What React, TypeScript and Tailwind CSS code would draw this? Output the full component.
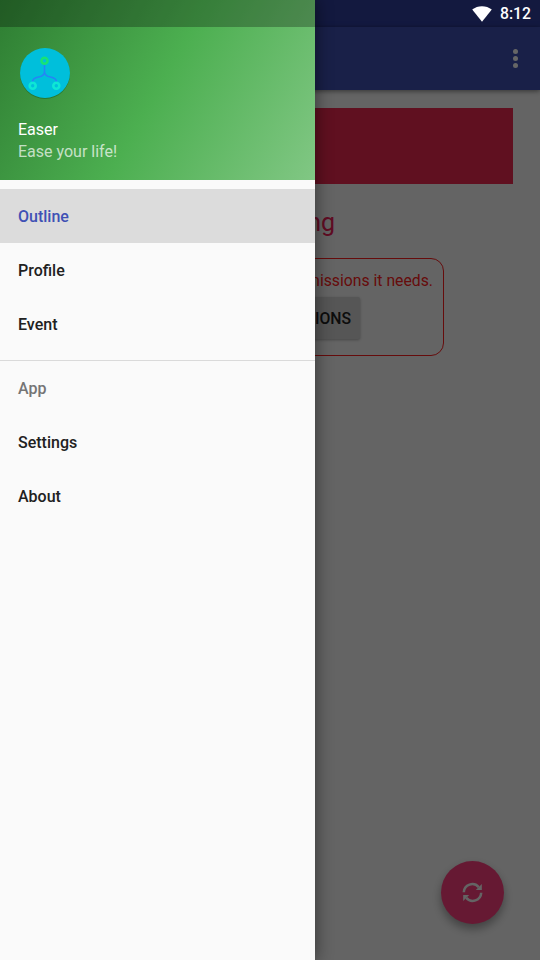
import React from "react";

function WifiIcon() {
  return (
    <svg width="20" height="16" viewBox="0 0 20 16" fill="#fff">
      <path d="M0.2 3.6C3 1.3 6.400 0.200 10 0.200S17 1.300 19.800 3.600L10 15.800Z" />
    </svg>
  );
}

function Logo() {
  return (
    <svg width="54" height="54" viewBox="0 0 54 54" fill="none">
      <circle cx="27" cy="28" r="25" fill="#1b5e20" fillOpacity="0.55" />
      <circle cx="27" cy="27" r="25" fill="#00bfdb" />
      <path d="M26.500 18v7.500c0 3.500-3 5-6 5.500-3.500 .7-6 1.500-6 5M26.500 25.500c0 3.500 3 5 6 5.500 3.500 .7 6 1.500 6 5" stroke="#2585f5" strokeWidth="1.500" />
      <circle cx="26.500" cy="14.700" r="3" stroke="#17e376" strokeWidth="2.600" />
      <circle cx="14.700" cy="39.700" r="3" stroke="#0ee7d5" strokeWidth="2.600" />
      <circle cx="38.300" cy="39.700" r="3" stroke="#0ee7d5" strokeWidth="2.600" />
    </svg>
  );
}

function SyncIcon() {
  return (
    <svg width="21" height="21" viewBox="-0.5 -0.5 21 21" fill="none" stroke="#fafafa" strokeWidth="2.500">
      <path d="M1.300 9.800A8.500 8.500 0 0 1 16.200 4.600" />
      <path d="M18.700 10.200A8.500 8.500 0 0 1 3.800 15.400" />
      <path d="M19.300 1.600V7.400H13.300Z" fill="#fafafa" stroke="none" />
      <path d="M0.700 18.400V12.600H6.700Z" fill="#fafafa" stroke="none" />
    </svg>
  );
}

function MenuItem({ label, selected = false }: { label: string; selected?: boolean }) {
  return (
    <li
      className={
        selected
          ? "flex h-[54px] items-center bg-[#dcdcdc] px-[18px] pt-px text-[#3f51b5]"
          : "flex h-[54px] items-center px-[18px] pt-px text-[#212121]"
      }
    >
      {label}
    </li>
  );
}

function Drawer() {
  return (
    <aside className="absolute inset-y-0 left-0 w-[315px] bg-[#fafafa] text-[16px] shadow-[0_0_16px_1px_rgba(0,0,0,0.45)]">
      <header className="flex h-[180px] flex-col bg-[linear-gradient(119.7deg,#2e7d32,#4caf50_50%,#81c784)]">
        <div className="h-[27px] shrink-0 bg-black/27" />
        <div className="mt-[19px] ml-[18px] h-[54px]">
          <Logo />
        </div>
        <div className="mt-[19px] px-[18px] leading-[22px]">
          <p className="text-white">Easer</p>
          <p className="text-white/70">Ease your life!</p>
        </div>
      </header>
      <nav className="pt-[9px] font-medium">
        <ul>
          <MenuItem label="Outline" selected />
          <MenuItem label="Profile" />
          <MenuItem label="Event" />
        </ul>
        <div className="mt-[9px] border-t border-[#dadada]">
          <h2 className="flex h-[54px] items-center px-[18px] pt-px text-[#757575]">App</h2>
          <ul>
            <MenuItem label="Settings" />
            <MenuItem label="About" />
          </ul>
        </div>
      </nav>
    </aside>
  );
}

export default function App() {
  return (
    <div className="relative flex h-[960px] w-[540px] flex-col overflow-hidden bg-[#fafafa] font-[Roboto,sans-serif] text-[15.75px]">
      <div className="h-[27px] bg-[#303f9f]" />
      <div className="flex h-[63px] items-center justify-end bg-[#3f51b5] pr-[22px] shadow-[0_1px_5px_rgba(0,0,0,0.5)]">
        <div className="flex flex-col gap-[2px]">
          <i className="size-[5px] rounded-full bg-white" />
          <i className="size-[5px] rounded-full bg-white" />
          <i className="size-[5px] rounded-full bg-white" />
        </div>
      </div>
      <main className="flex flex-col px-[27px] pt-[18px]">
        <div className="h-[76px] bg-[#ef2850]" />
        <h1 className="mt-[23px] text-center text-[25px] leading-[32px] text-[#ef2058]">Not running</h1>
        <section className="mx-auto mt-[19px] flex h-[98px] w-[348px] flex-col items-end rounded-[13px] border border-[#ff2020] pt-[10px] pr-[10px]">
          <p className="leading-[24px] whitespace-nowrap text-[#ff2020]">Easer is not granted all permissions it needs.</p>
          <button className="mt-[4px] mr-[73px] flex h-[42px] w-[180px] items-center justify-end rounded-[2px] bg-[#d6d7d7] pt-px pr-[9px] font-medium whitespace-nowrap text-[#212121] shadow-[0_1px_3px_rgba(0,0,0,0.3)]">
            GRANT PERMISSIONS
          </button>
        </section>
      </main>
      <div className="mt-auto mr-[36px] mb-[36px] flex size-[63px] items-center justify-center self-end rounded-full bg-[#ff4081] shadow-[0_5px_10px_rgba(0,0,0,0.35)]">
        <SyncIcon />
      </div>
      <div className="absolute inset-0 bg-black/60" />
      <Drawer />
      <div className="absolute top-0 right-0 flex h-[27px] items-center gap-[8px] pr-[9px] font-medium text-white">
        <WifiIcon />
        <span>8:12</span>
      </div>
    </div>
  );
}
